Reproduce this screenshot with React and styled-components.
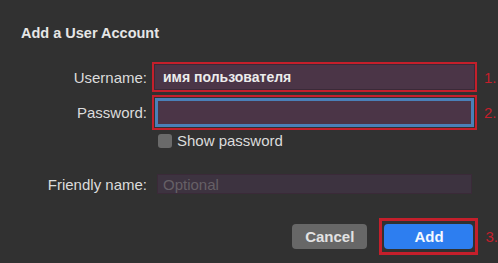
import React from "react";
import styled, { createGlobalStyle } from "styled-components";

const Global = createGlobalStyle`
  html, body { margin: 0; padding: 0; background: #313131; }
  body { font-family: "Liberation Sans", Arial, sans-serif; -webkit-font-smoothing: antialiased; }
`;

const Dialog = styled.div`
  width: 498px;
  height: 263px;
  box-sizing: border-box;
  background: #313131;
  padding: 25px 0 0 21px;
  display: flex;
  flex-direction: column;
  overflow: hidden;
`;

const Title = styled.h1`
  margin: 0;
  font-size: 14.5px;
  line-height: 17px;
  font-weight: 700;
  color: #e6e6e6;
`;

const Form = styled.div`
  margin-top: 20px;
  margin-left: -21px;
  display: grid;
  grid-template-columns: 152px 325px 1fr;
  grid-template-rows: 30px 35px 15px 20px 20px;
  row-gap: 3px;
  align-items: center;
`;

const Label = styled.label`
  font-size: 15px;
  color: #dcdcdc;
  text-align: right;
  padding-right: 5px;
`;

const Mark = styled.div`
  align-self: stretch;
  box-sizing: border-box;
  border: 2px solid ${(p) => (p.$on ? "#c41f2b" : "transparent")};
  padding: ${(p) => p.$pad || 0}px;
  display: flex;
`;

const Field = styled.div`
  flex: 1;
  box-sizing: border-box;
  background: ${(p) => p.$bg || "#4b3547"};
  border: ${(p) => (p.$focus ? "3px solid #4a80b8" : "1px solid #3a2a38")};
  display: flex;
  align-items: center;
  padding-left: ${(p) => p.$indent || 7}px;
  font-size: 14px;
  font-weight: 700;
  color: #ececec;
`;

const Placeholder = styled.span`
  font-size: 15px;
  font-weight: 400;
  color: #666066;
`;

const Num = styled.span`
  color: #c41f2b;
  font-size: 15px;
  padding-left: 7px;
`;

const CheckRow = styled.div`
  grid-column: 2 / 3;
  display: flex;
  align-items: center;
  gap: 5px;
  padding-left: 6px;
  font-size: 15px;
  color: #dcdcdc;
`;

const Box = styled.span`
  width: 14px;
  height: 14px;
  border-radius: 3px;
  background: #6a6a6a;
`;

const FriendlyWrap = styled.div`
  align-self: stretch;
  display: flex;
  padding: 0 5px;
`;

const Spacer = styled.div`
  grid-column: 1 / 4;
`;

const Buttons = styled.div`
  margin-top: 24px;
  display: flex;
  align-items: center;
  margin-left: 271px;
`;

const Button = styled.button`
  box-sizing: border-box;
  height: 25px;
  width: ${(p) => p.$w}px;
  border: none;
  border-radius: 4px;
  background: ${(p) => (p.$primary ? "#2d7ef0" : "#676767")};
  color: ${(p) => (p.$primary ? "#f4f8ff" : "#e2e2e2")};
  font-family: "Liberation Sans", Arial, sans-serif;
  font-size: 15px;
  font-weight: 700;
  padding: 0;
`;

const ButtonMark = styled.div`
  margin-left: 12px;
  border: 3px solid #c41f2b;
  padding: 0 2px;
  height: 37px;
  box-sizing: border-box;
  display: flex;
  align-items: center;
`;

export default function App() {
  return (
    <>
      <Global />
      <Dialog>
        <Title>Add a User Account</Title>
        <Form>
          <Label>Username:</Label>
          <Mark $on>
            <Field $indent={8}>имя пользователя</Field>
          </Mark>
          <Num>1.</Num>

          <Label>Password:</Label>
          <Mark $on $pad={1}>
            <Field $focus />
          </Mark>
          <Num>2.</Num>

          <span />
          <CheckRow>
            <Box />
            Show password
          </CheckRow>
          <span />

          <Spacer />

          <Label>Friendly name:</Label>
          <FriendlyWrap>
            <Field $bg="#3d3340" $indent={5}>
              <Placeholder>Optional</Placeholder>
            </Field>
          </FriendlyWrap>
          <span />
        </Form>
        <Buttons>
          <Button $w={76}>Cancel</Button>
          <ButtonMark>
            <Button $primary $w={89}>Add</Button>
          </ButtonMark>
          <Num>3.</Num>
        </Buttons>
      </Dialog>
    </>
  );
}
